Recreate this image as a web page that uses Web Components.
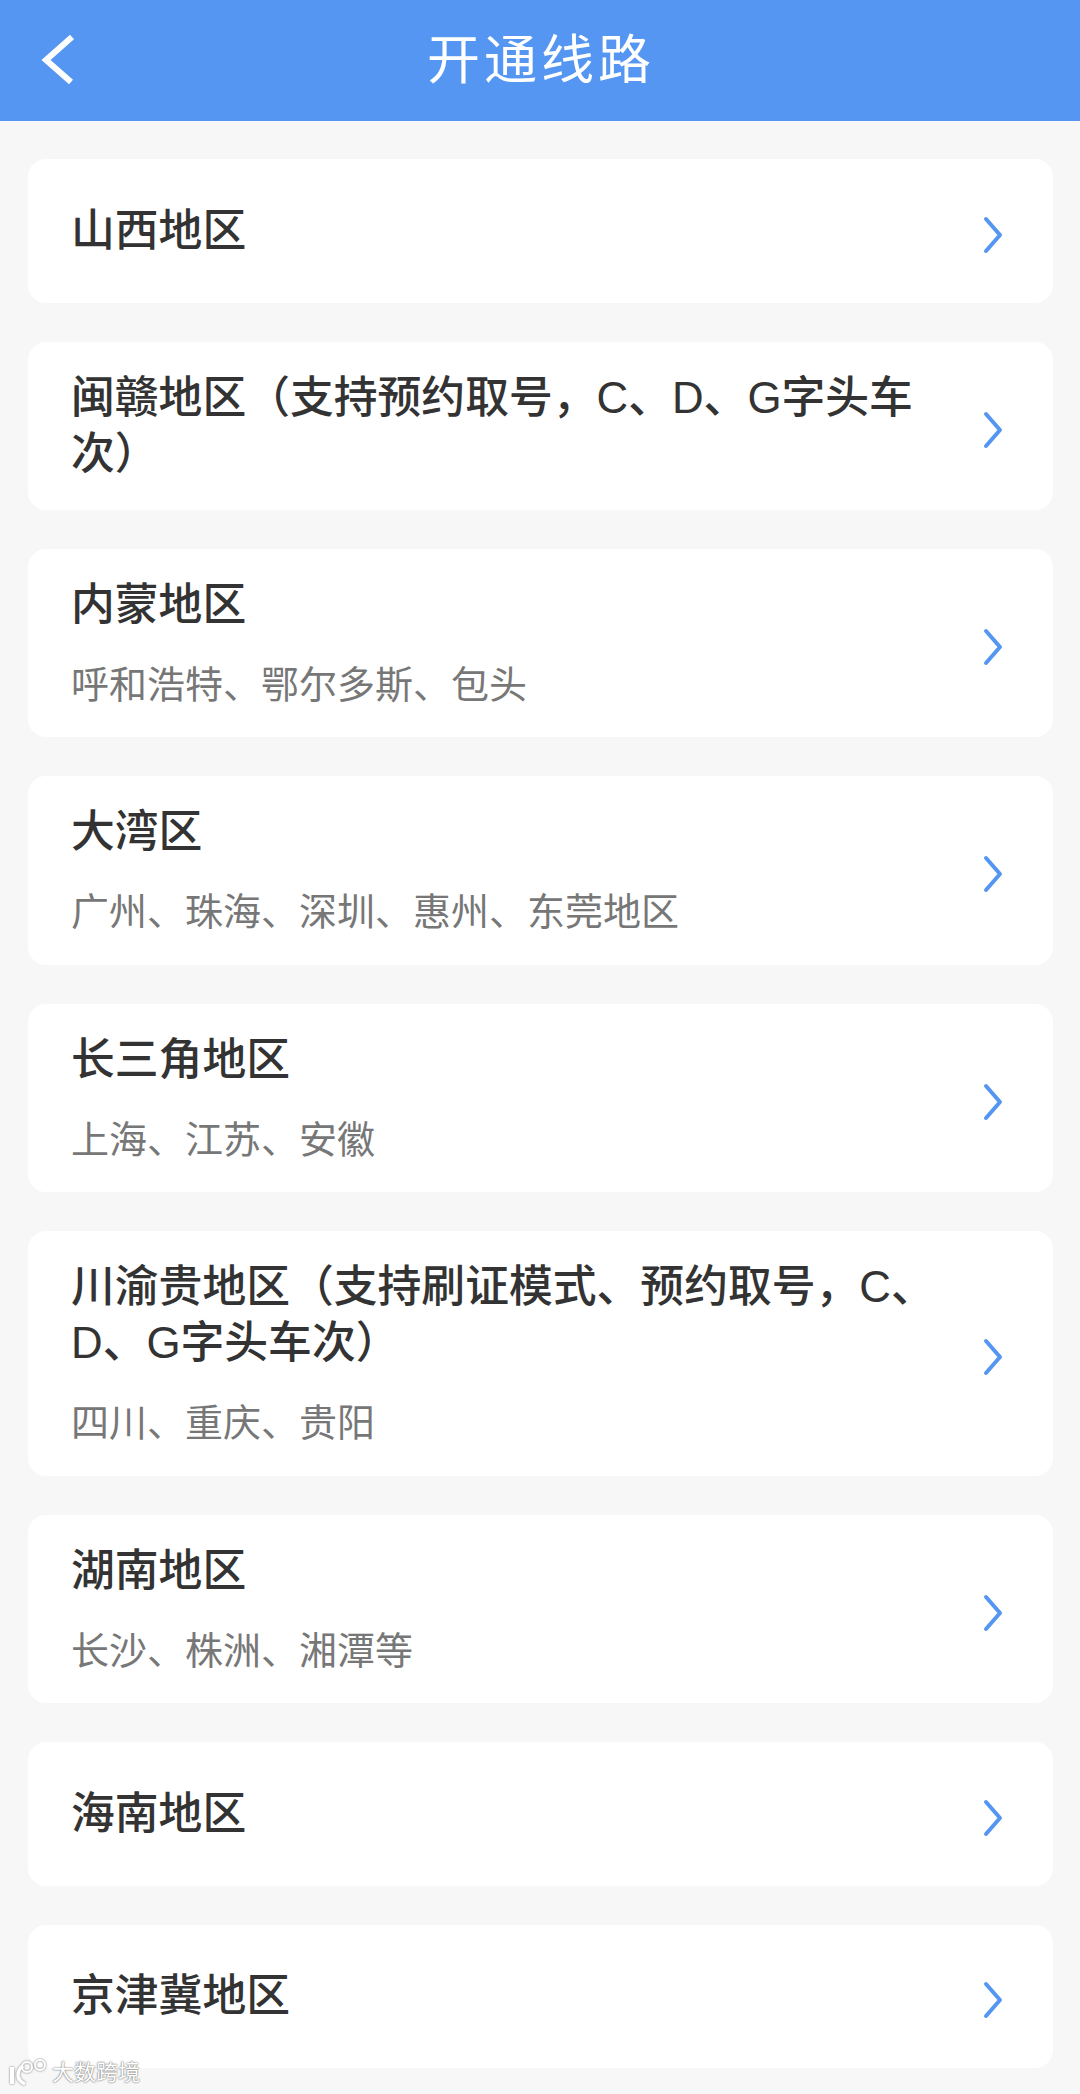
<!DOCTYPE html>
<html lang="zh-CN">
  <head>
    <meta charset="UTF-8" />
    <title>开通线路</title>
    <style>
      html, body { margin: 0; padding: 0; background: #f7f7f7; }
      body {
        width: 1080px;
        height: 2094px;
        overflow: hidden;
        position: relative;
        font-family: "Liberation Sans", "Noto Sans CJK SC", sans-serif;
      }
    </style>
  </head>
  <body>
    <app-header>开通线路</app-header>
    <route-list>
      <route-card>山西地区</route-card>
      <route-card>闽赣地区（支持预约取号，C、D、G字头车次）</route-card>
      <route-card>内蒙地区<span slot="cities">呼和浩特、鄂尔多斯、包头</span></route-card>
      <route-card>大湾区<span slot="cities">广州、珠海、深圳、惠州、东莞地区</span></route-card>
      <route-card>长三角地区<span slot="cities">上海、江苏、安徽</span></route-card>
      <route-card>川渝贵地区（支持刷证模式、预约取号，C、D、G字头车次）<span slot="cities">四川、重庆、贵阳</span></route-card>
      <route-card>湖南地区<span slot="cities">长沙、株洲、湘潭等</span></route-card>
      <route-card>海南地区</route-card>
      <route-card>京津冀地区</route-card>
    </route-list>
    <water-mark></water-mark>

    <script>
      class AppHeader extends HTMLElement {
        constructor() {
          super();
          this.attachShadow({ mode: "open" });
          this.shadowRoot.innerHTML = `
          <style>
            :host {
              display: flex;
              align-items: center;
              justify-content: center;
              height: 121px;
              background: #5596f3;
              color: #fff;
              position: relative;
            }
            .title { font-size: 53px; letter-spacing: 4px; line-height: 60px; margin-left: 2px; }
            svg { position: absolute; left: 0; top: 0; }
          </style>
          <svg width="100" height="121" viewBox="0 0 100 121">
            <path d="M72 37 L46 60 L71 82" fill="none" stroke="#fff" stroke-width="6" />
          </svg>
          <div class="title"><slot></slot></div>
        `;
        }
      }
      customElements.define("app-header", AppHeader);

      class RouteList extends HTMLElement {
        constructor() {
          super();
          this.attachShadow({ mode: "open" });
          this.shadowRoot.innerHTML = `
          <style>
            :host {
              display: flex;
              flex-direction: column;
              gap: 39px;
              padding: 38px 27px 0 28px;
            }
          </style>
          <slot></slot>
        `;
        }
      }
      customElements.define("route-list", RouteList);

      class RouteCard extends HTMLElement {
        constructor() {
          super();
          this.attachShadow({ mode: "open" });
          this.shadowRoot.innerHTML = `
          <style>
            :host {
              display: flex;
              align-items: center;
              background: #fff;
              border-radius: 18px;
              padding: 0 50px 0 43px;
              min-height: 143.5px;
              box-sizing: border-box;
            }
            .text { flex: 1; min-width: 0; padding: 28px 0; }
            .title {
              font-size: 43.8px;
              line-height: 56px;
              font-weight: 500;
              color: #333;
              padding-right: 30px;
            }
            .cities {
              font-size: 38px;
              line-height: 46px;
              color: #777;
              margin: 29px 0 1.5px;
            }
            .cities.empty { display: none; }
            svg { flex: none; margin-top: 8px; }
          </style>
          <div class="text">
            <div class="title"><slot></slot></div>
            <div class="cities"><slot name="cities"></slot></div>
          </div>
          <svg width="20" height="38" viewBox="0 0 20 38">
            <path d="M3 3 L17 19 L3 35" fill="none" stroke="#5596f3" stroke-width="4" stroke-linecap="round" stroke-linejoin="round" />
          </svg>
        `;
          const slot = this.shadowRoot.querySelector('slot[name="cities"]');
          if (!this.querySelector('[slot="cities"]')) {
            slot.parentElement.classList.add("empty");
          }
        }
      }
      customElements.define("route-card", RouteCard);

      class WaterMark extends HTMLElement {
        constructor() {
          super();
          this.attachShadow({ mode: "open" });
          this.shadowRoot.innerHTML = `
          <style>
            :host {
              position: absolute;
              left: 9px;
              bottom: 7px;
              display: flex;
              align-items: center;
              gap: 3px;
              color: #fff;
              font-size: 22px;
              line-height: 26px;
              text-shadow: 0 0 2px #777, 0 0 1px #777;
            }
            svg { filter: drop-shadow(0 0 1px #777); }
          </style>
          <svg width="40" height="28" viewBox="0 0 40 28" fill="none" stroke="#fff">
            <path d="M3 8 V25" stroke-width="4" />
            <path d="M14 7 C7 12 7 21 16 25" stroke-width="3.5" />
            <circle cx="18" cy="8" r="5" stroke-width="2" />
            <circle cx="31" cy="6" r="5" stroke-width="2" />
          </svg>
          <span>大数跨境</span>
        `;
        }
      }
      customElements.define("water-mark", WaterMark);
    </script>
  </body>
</html>
